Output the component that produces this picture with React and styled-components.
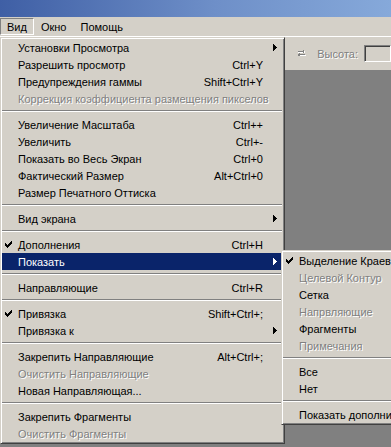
import React from 'react';
import styled, { createGlobalStyle, css } from 'styled-components';

const GlobalStyle = createGlobalStyle`
  html, body {
    margin: 0;
    padding: 0;
    background: #808080;
    overflow: hidden;
  }
`;

const Window = styled.div`
  position: relative;
  width: 391px;
  height: 447px;
  overflow: hidden;
  display: flex;
  flex-direction: column;
  background: #808080;
  font-family: "Liberation Sans", Arial, sans-serif;
  font-size: 11px;
  color: #000;
`;

const TitleBar = styled.div`
  height: 17px;
  background: linear-gradient(to right, #3f5fa5, #6e8fc8 55%, #86a9da);
`;

const MenuBar = styled.div`
  height: 19px;
  display: flex;
  align-items: center;
  background: #d4d0c8;
`;

const MenuTitle = styled.div`
  height: 17px;
  line-height: 17px;
  padding: 0 6px;
  box-sizing: border-box;
  border: 1px solid transparent;
  ${p => p.$pressed && css`
    border-color: #808080 #fff #fff #808080;
  `}
`;

const Toolbar = styled.div`
  height: 34px;
  display: flex;
  align-items: center;
  padding-left: 297px;
  background: #d4d0c8;
  border-top: 1px solid #fff;
  box-sizing: border-box;
`;

const ToolLabel = styled.span`
  color: #808080;
  text-shadow: 1px 1px 0 #fff;
  margin-left: 11px;
`;

const Field = styled.div`
  width: 40px;
  height: 17px;
  margin-left: 6px;
  box-sizing: border-box;
  border: 1px solid;
  border-color: #808080 #fff #fff #808080;
  box-shadow: inset 1px 1px #404040;
  background: #d4d0c8;
`;

const Workspace = styled.div`
  flex: 1;
  background: #808080;
`;

const MenuPanel = styled.div`
  position: absolute;
  width: ${p => p.$width}px;
  top: ${p => p.$top}px;
  left: ${p => p.$left};
  box-sizing: border-box;
  padding: 1px;
  background: #d4d0c8;
  border: 1px solid;
  border-color: #d4d0c8 #404040 #404040 #d4d0c8;
  box-shadow: inset 1px 1px #fff, inset -1px -1px #808080;
  z-index: ${p => p.$z || 1};
`;

const Row = styled.div`
  position: relative;
  height: 17px;
  display: grid;
  grid-template-columns: 16px 1fr auto 20px;
  align-items: center;
  white-space: nowrap;
  color: ${p => (p.$disabled ? '#808080' : p.$active ? '#fff' : '#000')};
  text-shadow: ${p => (p.$disabled ? '1px 1px 0 #fff' : 'none')};
  background: ${p => (p.$active ? '#0a246a' : 'transparent')};
`;

const Mark = styled.span`
  display: flex;
  padding-left: 3px;
`;

const Shortcut = styled.span`
  text-align: right;
`;

const ArrowCell = styled.span`
  display: flex;
  padding-left: 10px;
`;

const Separator = styled.div`
  height: 9px;
  box-sizing: border-box;
  padding: 3px 1px 4px 0;
  &::before {
    content: '';
    display: block;
    height: 1px;
    background: #808080;
    border-bottom: 1px solid #fff;
  }
`;

const Check = ({ color = '#000' }) => (
  <svg width="7" height="7" viewBox="0 0 7 7" shapeRendering="crispEdges">
    <path
      fill={color}
      d="M6 0h1v3h-1v1h-1v1h-1v1h-1v1h-1v-1h-1v-1h-1v-3h1v1h1v1h1v-1h1v-1h1z"
    />
  </svg>
);

const Arrow = ({ color = '#000' }) => (
  <svg width="4" height="7" viewBox="0 0 4 7" shapeRendering="crispEdges">
    <path fill={color} d="M0 0h1v1h1v1h1v1h1v1h-1v1h-1v1h-1v1h-1z" />
  </svg>
);

const SwapIcon = () => (
  <svg width="14" height="13" viewBox="0 0 14 13" shapeRendering="crispEdges">
    <g fill="#fff" transform="translate(1 1)">
      <path d="M1 3h10v1h-10z M9 1h1v5h-1z M10 2h1v3h-1z" />
      <path d="M2 8h10v1h-10z M3 6h1v5h-1z M2 7h1v3h-1z" />
    </g>
    <g fill="#808080">
      <path d="M1 3h10v1h-10z M9 1h1v5h-1z M10 2h1v3h-1z" />
      <path d="M2 8h10v1h-10z M3 6h1v5h-1z M2 7h1v3h-1z" />
    </g>
  </svg>
);

const Item = ({ label, shortcut, checked, disabled, arrow, active, children }) => (
  <Row $disabled={disabled} $active={active}>
    <Mark>{checked && <Check color={active ? '#fff' : '#000'} />}</Mark>
    <span>{label}</span>
    <Shortcut>{shortcut}</Shortcut>
    <ArrowCell>{arrow && <Arrow color={active ? '#fff' : '#000'} />}</ArrowCell>
    {children}
  </Row>
);

const ShowSubmenu = () => (
  <MenuPanel $width={150} $top={-3} $left="calc(100% - 2px)" $z={2}>
    <Item label="Выделение Краев" checked />
    <Item label="Целевой Контур" disabled />
    <Item label="Сетка" />
    <Item label="Напрвляющие" disabled />
    <Item label="Фрагменты" />
    <Item label="Примечания" disabled />
    <Separator />
    <Item label="Все" />
    <Item label="Нет" />
    <Separator />
    <Item label="Показать дополнительно..." />
  </MenuPanel>
);

export default function App() {
  return (
    <Window>
      <GlobalStyle />
      <TitleBar />
      <MenuBar>
        <MenuTitle $pressed>Вид</MenuTitle>
        <MenuTitle>Окно</MenuTitle>
        <MenuTitle>Помощь</MenuTitle>
      </MenuBar>
      <Toolbar>
        <SwapIcon />
        <ToolLabel>Высота:</ToolLabel>
        <Field />
      </Toolbar>
      <Workspace />

      <MenuPanel $width={285} $top={37} $left="0px">
        <Item label="Установки Просмотра" arrow />
        <Item label="Разрешить просмотр" shortcut="Ctrl+Y" />
        <Item label="Предупреждения гаммы" shortcut="Shift+Ctrl+Y" />
        <Item label="Коррекция коэффициента размещения пикселов" disabled />
        <Separator />
        <Item label="Увеличение Масштаба" shortcut="Ctrl++" />
        <Item label="Увеличить" shortcut="Ctrl+-" />
        <Item label="Показать во Весь Экран" shortcut="Ctrl+0" />
        <Item label="Фактический Размер" shortcut="Alt+Ctrl+0" />
        <Item label="Размер Печатного Оттиска" />
        <Separator />
        <Item label="Вид экрана" arrow />
        <Separator />
        <Item label="Дополнения" shortcut="Ctrl+H" checked />
        <Item label="Показать" arrow active>
          <ShowSubmenu />
        </Item>
        <Separator />
        <Item label="Направляющие" shortcut="Ctrl+R" />
        <Separator />
        <Item label="Привязка" shortcut="Shift+Ctrl+;" checked />
        <Item label="Привязка к" arrow />
        <Separator />
        <Item label="Закрепить Направляющие" shortcut="Alt+Ctrl+;" />
        <Item label="Очистить Направляющие" disabled />
        <Item label="Новая Направляющая..." />
        <Separator />
        <Item label="Закрепить Фрагменты" />
        <Item label="Очистить Фрагменты" disabled />
      </MenuPanel>
    </Window>
  );
}
